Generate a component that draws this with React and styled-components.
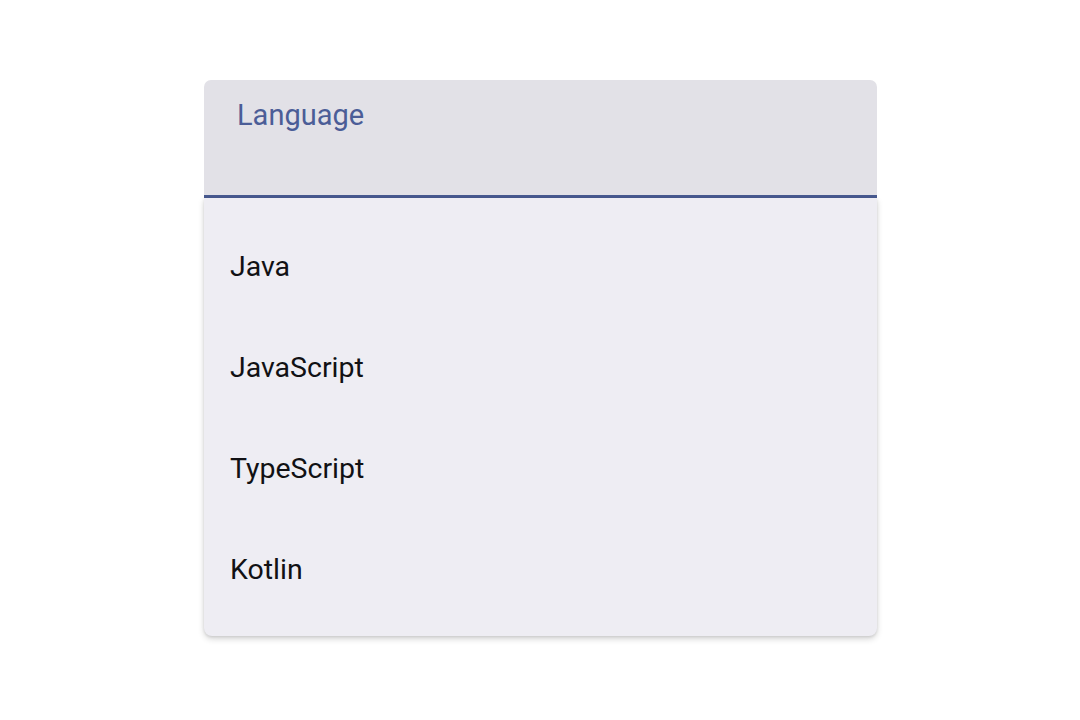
import React from 'react'
import styled, { createGlobalStyle } from 'styled-components'

const GlobalStyle = createGlobalStyle`
  html, body {
    margin: 0;
    padding: 0;
    background: #ffffff;
    font-family: Roboto, "Liberation Sans", sans-serif;
  }
`

const Page = styled.div`
  width: 1080px;
  height: 720px;
  display: flex;
  justify-content: center;
  padding-top: 80px;
  box-sizing: border-box;
`

const Select = styled.div`
  width: 673px;
  margin-left: 1px;
  display: flex;
  flex-direction: column;
`

const Field = styled.div`
  height: 97px;
  background: #e2e1e7;
  border-radius: 7px 7px 0 0;
  border-bottom: 3px solid #485a90;
  padding: 18px 33px 0;
`

const Label = styled.div`
  font-size: 29px;
  line-height: 34px;
  color: #4b5d97;
`

const Menu = styled.ul`
  list-style: none;
  margin: 0;
  padding: 18px 0 16px;
  background: #eeedf3;
  border-radius: 0 0 8px 8px;
  box-shadow: 0 3px 6px rgba(0, 0, 0, 0.16), 0 1px 3px rgba(0, 0, 0, 0.1);
`

const Item = styled.li`
  height: 101px;
  display: flex;
  align-items: center;
  padding-left: 26px;
  font-size: 28.5px;
  color: #111114;
`

const languages = ['Java', 'JavaScript', 'TypeScript', 'Kotlin']

export default function App() {
  return (
    <>
      <GlobalStyle />
      <Page>
        <Select>
          <Field>
            <Label>Language</Label>
          </Field>
          <Menu>
            {languages.map((lang) => (
              <Item key={lang}>{lang}</Item>
            ))}
          </Menu>
        </Select>
      </Page>
    </>
  )
}
